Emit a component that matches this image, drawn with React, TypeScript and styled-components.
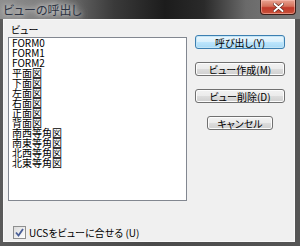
import React from "react";
import styled, { createGlobalStyle } from "styled-components";

const Global = createGlobalStyle`
  html, body { margin: 0; padding: 0; background: #000; }
  body { font-family: "Noto Sans CJK JP", "Noto Sans", sans-serif; }
  * { box-sizing: border-box; }
`;

const Window = styled.div`
  width: 300px;
  height: 246px;
  display: flex;
  flex-direction: column;
  background: linear-gradient(90deg, #5a5a5a 0%, #4a4a4a 50%, #555 100%);
  overflow: hidden;
`;

const TitleBar = styled.div`
  height: 19px;
  flex: none;
  display: flex;
  align-items: flex-start;
  justify-content: space-between;
  background: linear-gradient(90deg, #8e8e8e 0%, #7a7a7a 18%, #3a3a3a 38%, #1c1c1c 55%, #2a2a2a 68%, #6a6a6a 82%, #7e7e7e 100%);
`;

const Title = styled.div`
  margin: 3px 0 0 3px;
  font-size: 12px;
  line-height: 14px;
  color: #2c3342;
  font-feature-settings: "palt";
  text-shadow: 0 0 4px #d8d8d8, 0 0 8px #c8c8c8, 0 0 10px #bbb;
`;

const CloseButton = styled.div`
  width: 36px;
  height: 15px;
  margin-right: 4px;
  display: flex;
  align-items: center;
  justify-content: center;
  border: 1px solid #3a1d18;
  border-top: none;
  border-radius: 0 0 4px 4px;
  background: linear-gradient(180deg, #e9a493 0%, #d4705a 45%, #c0392a 55%, #c9523a 100%);
  box-shadow: inset 0 0 0 1px rgba(255, 200, 190, 0.5);
`;

const Client = styled.div`
  flex: 1;
  margin: 0 5px 4px 3px;
  background: #f0f0f0;
  border: 1px solid #f8f8f8;
  display: flex;
  flex-direction: column;
  padding: 2px 0 0 4px;
`;

const Body = styled.div`
  display: flex;
  gap: 8px;
`;

const LeftCol = styled.div`
  display: flex;
  flex-direction: column;
`;

const Label = styled.div`
  height: 15px;
  margin-left: 3px;
  font-size: 10px;
  line-height: 15px;
  color: #000;
  font-feature-settings: "palt";
`;

const ListBox = styled.div`
  width: 179px;
  height: 164px;
  border: 1px solid #828790;
  background: #fff;
  padding: 0 0 0 3px;
`;

const Item = styled.div`
  font-size: 10px;
  line-height: 10px;
  height: 10px;
  color: #000;
  white-space: nowrap;
`;

const RightCol = styled.div`
  display: flex;
  flex-direction: column;
  align-items: center;
  gap: 13px;
  padding-top: 13px;
  width: 90px;
`;

const Button = styled.div<{ $primary?: boolean; $w?: number }>`
  width: ${(p) => p.$w ?? 90}px;
  height: 14px;
  display: flex;
  align-items: center;
  justify-content: center;
  font-size: 10px;
  color: #000;
  font-feature-settings: "palt";
  border-radius: 3px;
  border: 1px solid ${(p) => (p.$primary ? "#3c7fb1" : "#707070")};
  background: ${(p) =>
    p.$primary
      ? "linear-gradient(180deg, #eaf6fd 0%, #d9f0fc 50%, #bee6fd 51%, #a7d9f5 100%)"
      : "linear-gradient(180deg, #f2f2f2 0%, #ebebeb 50%, #dddddd 51%, #cfcfcf 100%)"};
  box-shadow: inset 0 0 0 1px ${(p) => (p.$primary ? "#c4e5f6" : "#fcfcfc")};
`;

const Footer = styled.div`
  margin-top: 24px;
  margin-left: 5px;
  display: flex;
  align-items: center;
  gap: 3px;
  font-size: 10px;
  color: #000;
  font-feature-settings: "palt";
`;

const Check = styled.div`
  width: 13px;
  height: 13px;
  border: 1px solid #8e8f8f;
  background: linear-gradient(135deg, #dcdcdc 0%, #f4f4f4 70%, #fff 100%);
  display: flex;
  align-items: center;
  justify-content: center;
`;

const items = [
  "FORM0",
  "FORM1",
  "FORM2",
  "平面図",
  "下面図",
  "左面図",
  "右面図",
  "正面図",
  "背面図",
  "南西等角図",
  "南東等角図",
  "北西等角図",
  "北東等角図",
];

export default function App() {
  return (
    <>
      <Global />
      <Window>
        <TitleBar>
          <Title>ビューの呼出し</Title>
          <CloseButton>
            <svg width="11" height="9" viewBox="0 0 11 9">
              <path d="M1.5 1 L9.5 8 M9.5 1 L1.5 8" stroke="#5a1f14" strokeWidth="3.2" strokeLinecap="round" />
              <path d="M1.5 1 L9.5 8 M9.5 1 L1.5 8" stroke="#fff" strokeWidth="2" strokeLinecap="round" />
            </svg>
          </CloseButton>
        </TitleBar>
        <Client>
          <Body>
            <LeftCol>
              <Label>ビュー</Label>
              <ListBox>
                {items.map((t) => (
                  <Item key={t}>{t}</Item>
                ))}
              </ListBox>
            </LeftCol>
            <RightCol>
              <Button $primary>呼び出し(Y)</Button>
              <Button>ビュー作成(M)</Button>
              <Button>ビュー削除(D)</Button>
              <Button $w={66}>キャンセル</Button>
            </RightCol>
          </Body>
          <Footer>
            <Check>
              <svg width="9" height="9" viewBox="0 0 9 9">
                <path d="M1 4.5 L3.5 7.5 L8 1" fill="none" stroke="#4a5f97" strokeWidth="1.8" />
              </svg>
            </Check>
            <span>UCSをビューに合せる (U)</span>
          </Footer>
        </Client>
      </Window>
    </>
  );
}
